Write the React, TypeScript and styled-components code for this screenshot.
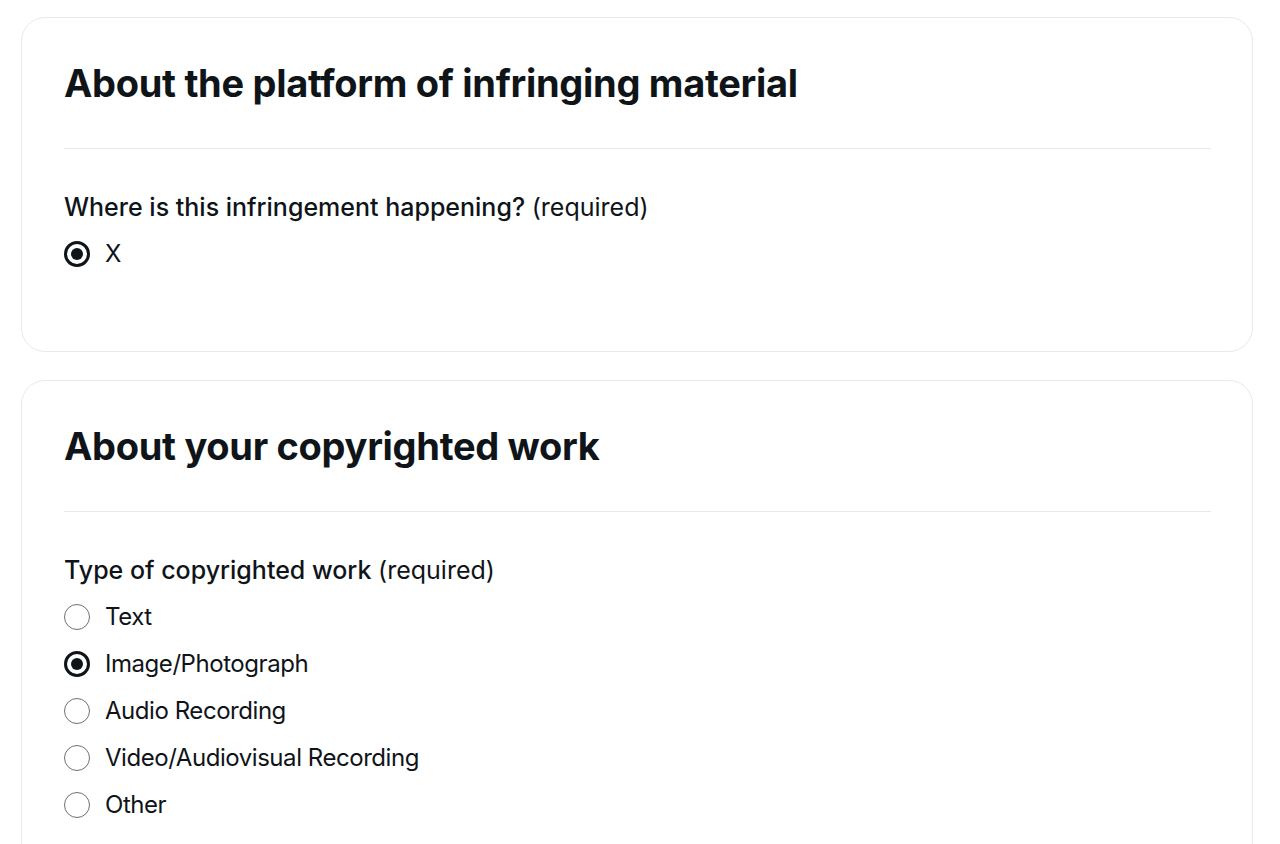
import styled, { createGlobalStyle } from "styled-components";

const GlobalStyle = createGlobalStyle`
  body {
    margin: 0;
    background: #ffffff;
    color: #0f1419;
    font-family: Inter, "Noto Sans", sans-serif;
  }
`;

interface Section {
  title: string;
  question: string;
  options: string[];
  selected: string;
}

const sections: Section[] = [
  {
    title: "About the platform of infringing material",
    question: "Where is this infringement happening?",
    options: ["X"],
    selected: "X",
  },
  {
    title: "About your copyrighted work",
    question: "Type of copyrighted work",
    options: [
      "Text",
      "Image/Photograph",
      "Audio Recording",
      "Video/Audiovisual Recording",
      "Other",
    ],
    selected: "Image/Photograph",
  },
];

export default function App() {
  return (
    <>
      <GlobalStyle />
      <Page>
        {sections.map((section) => (
          <Card key={section.title}>
            <Heading>{section.title}</Heading>
            <Divider />
            <Fieldset>
              <Legend>
                {section.question} <Required>(required)</Required>
              </Legend>
              <OptionList>
                {section.options.map((option) => (
                  <Option key={option}>
                    <Radio $checked={option === section.selected} />
                    <span>{option}</span>
                  </Option>
                ))}
              </OptionList>
            </Fieldset>
          </Card>
        ))}
      </Page>
    </>
  );
}

const Page = styled.main`
  display: flex;
  flex-direction: column;
  gap: 28px;
  padding: 17px 27px 0 21px;
`;

const Card = styled.section`
  border: 1px solid #e7eaeb;
  border-radius: 24px;
  padding: 42px 41px 83px 42px;
`;

const Heading = styled.h2`
  margin: 0;
  font-size: 38px;
  font-weight: 700;
  line-height: 46px;
  letter-spacing: -0.3px;
  color: #0f1419;
`;

const Divider = styled.hr`
  border: none;
  border-top: 1px solid #e7eaeb;
  margin: 42px 0 44px;
`;

const Fieldset = styled.div`
  display: flex;
  flex-direction: column;
  gap: 17px;
`;

const Legend = styled.div`
  font-size: 25px;
  font-weight: 500;
  line-height: 29px;
`;

const Required = styled.span`
  font-weight: 400;
`;

const OptionList = styled.div`
  display: flex;
  flex-direction: column;
  gap: 18px;
`;

const Option = styled.label`
  display: flex;
  align-items: center;
  gap: 15px;
  font-size: 24px;
  line-height: 29px;
  letter-spacing: -0.45px;
`;

const Radio = styled.span<{ $checked: boolean }>`
  box-sizing: border-box;
  width: 26px;
  height: 26px;
  flex: none;
  border-radius: 50%;
  border: ${(p) => (p.$checked ? "3px solid #0f1419" : "1.5px solid #6e7173")};
  display: grid;
  place-items: center;

  &::after {
    content: "";
    width: 12px;
    height: 12px;
    border-radius: 50%;
    background: #0f1419;
    display: ${(p) => (p.$checked ? "block" : "none")};
  }
`;
